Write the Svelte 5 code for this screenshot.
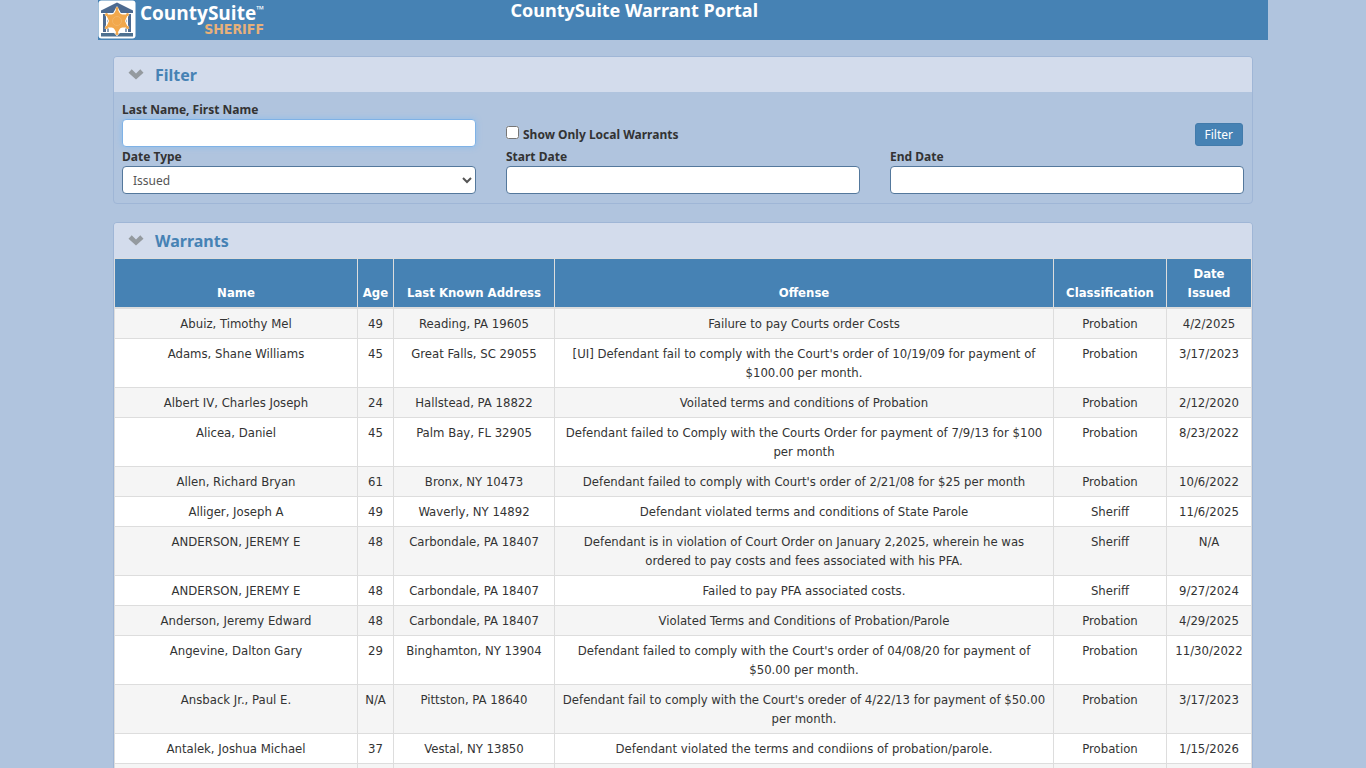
<script lang="ts">
    let filterOpen = $state(true);
    let warrantsOpen = $state(true);
    let name = $state("");
    let localOnly = $state(false);
    let dateType = $state("Issued");
    let startDate = $state("");
    let endDate = $state("");

    const warrants = [
        ["Abuiz, Timothy Mel", "49", "Reading, PA 19605", "Failure to pay Courts order Costs", "Probation", "4/2/2025"],
        ["Adams, Shane Williams", "45", "Great Falls, SC 29055", "[UI] Defendant fail to comply with the Court's order of 10/19/09 for payment of $100.00 per month.", "Probation", "3/17/2023"],
        ["Albert IV, Charles Joseph", "24", "Hallstead, PA 18822", "Voilated terms and conditions of Probation", "Probation", "2/12/2020"],
        ["Alicea, Daniel", "45", "Palm Bay, FL 32905", "Defendant failed to Comply with the Courts Order for payment of 7/9/13 for $100 per month", "Probation", "8/23/2022"],
        ["Allen, Richard Bryan", "61", "Bronx, NY 10473", "Defendant failed to comply with Court's order of 2/21/08 for $25 per month", "Probation", "10/6/2022"],
        ["Alliger, Joseph A", "49", "Waverly, NY 14892", "Defendant violated terms and conditions of State Parole", "Sheriff", "11/6/2025"],
        ["ANDERSON, JEREMY E", "48", "Carbondale, PA 18407", "Defendant is in violation of Court Order on January 2,2025, wherein he was ordered to pay costs and fees associated with his PFA.", "Sheriff", "N/A"],
        ["ANDERSON, JEREMY E", "48", "Carbondale, PA 18407", "Failed to pay PFA associated costs.", "Sheriff", "9/27/2024"],
        ["Anderson, Jeremy Edward", "48", "Carbondale, PA 18407", "Violated Terms and Conditions of Probation/Parole", "Probation", "4/29/2025"],
        ["Angevine, Dalton Gary", "29", "Binghamton, NY 13904", "Defendant failed to comply with the Court's order of 04/08/20 for payment of $50.00 per month.", "Probation", "11/30/2022"],
        ["Ansback Jr., Paul E.", "N/A", "Pittston, PA 18640", "Defendant fail to comply with the Court's oreder of 4/22/13 for payment of $50.00 per month.", "Probation", "3/17/2023"],
        ["Antalek, Joshua Michael", "37", "Vestal, NY 13850", "Defendant violated the terms and condiions of probation/parole.", "Probation", "1/15/2026"],
        ["", "", "", "", "", ""],
    ];
</script>

{#snippet chevron()}
    <svg class="chevron" viewBox="0 0 16 11" aria-hidden="true">
        <path d="M.5 3.7 3.7 .3 8 4.4 12.3 .3 15.5 3.7 8 10.6Z" fill="#949a9f" />
    </svg>
{/snippet}

<div class="container">
    <header>
        <div class="brand">
            <svg class="badge" viewBox="0 0 38 39" aria-hidden="true">
                <rect x=".5" y=".5" width="37" height="38" rx="3" fill="#fff" />
                <path d="M3 10.5 19 2.5 35 10.5v2.5H3Z" fill="#4d6a90" />
                <path d="M5 14h3v18H5ZM30 14h3v18h-3Z" fill="#4d6a90" />
                <path d="M9 14h2v18H9ZM27 14h2v18h-2Z" fill="#8ba0b8" />
                <path d="M3 33h13l3 3 3-3h13v3.500H3Z" fill="#4d7090" />
                <path d="M19 8 22.500 14.500 30 14.500 27 21 30 27.500 22.500 27.500 19 34 15.500 27.500 8 27.500 11 21 8 14.500 15.500 14.500Z" fill="#f2a84c" stroke="#fff" stroke-width="2" paint-order="stroke" />
                <g fill="#f2a84c">
                    <circle cx="19" cy="21" r="8" />
                    <circle cx="19" cy="8.500" r="1.500" />
                    <circle cx="29.500" cy="14.500" r="1.500" />
                    <circle cx="29.500" cy="27.500" r="1.500" />
                    <circle cx="19" cy="33.500" r="1.500" />
                    <circle cx="8.500" cy="27.500" r="1.500" />
                    <circle cx="8.500" cy="14.500" r="1.500" />
                </g>
                <circle cx="19" cy="21" r="4.500" fill="none" stroke="#f4b565" />
            </svg>
            <div class="wordmark">
                <div class="suite">CountySuite<span class="tm">™</span></div>
                <div class="sheriff">SHERIFF</div>
            </div>
        </div>
        <h1>CountySuite Warrant Portal</h1>
    </header>

    <main>
        <section class="panel">
            <h2>
                <button class="toggle" aria-expanded={filterOpen} onclick={() => (filterOpen = !filterOpen)}>
                    {@render chevron()}Filter
                </button>
            </h2>
            {#if filterOpen}
                <form class="filters" onsubmit={(e) => e.preventDefault()}>
                    <div class="field">
                        <label for="name">Last Name, First Name</label>
                        <input id="name" class="focused" type="text" bind:value={name} />
                    </div>
                    <div class="check">
                        <input id="local" type="checkbox" bind:checked={localOnly} />
                        <label for="local">Show Only Local Warrants</label>
                    </div>
                    <div class="actions">
                        <button class="submit" type="submit">Filter</button>
                    </div>
                    <div class="field">
                        <label for="dateType">Date Type</label>
                        <select id="dateType" bind:value={dateType}>
                            <option>Issued</option>
                        </select>
                    </div>
                    <div class="field">
                        <label for="startDate">Start Date</label>
                        <input id="startDate" type="text" bind:value={startDate} />
                    </div>
                    <div class="field">
                        <label for="endDate">End Date</label>
                        <input id="endDate" type="text" bind:value={endDate} />
                    </div>
                </form>
            {/if}
        </section>

        <section class="panel">
            <h2>
                <button class="toggle" aria-expanded={warrantsOpen} onclick={() => (warrantsOpen = !warrantsOpen)}>
                    {@render chevron()}Warrants
                </button>
            </h2>
            {#if warrantsOpen}
                <table>
                    <colgroup>
                        <col class="c-name" />
                        <col class="c-age" />
                        <col class="c-address" />
                        <col />
                        <col class="c-class" />
                        <col class="c-date" />
                    </colgroup>
                    <thead>
                        <tr>
                            <th>Name</th>
                            <th>Age</th>
                            <th>Last Known Address</th>
                            <th>Offense</th>
                            <th>Classification</th>
                            <th>Date Issued</th>
                        </tr>
                    </thead>
                    <tbody>
                        {#each warrants as row}
                            <tr>
                                {#each row as cell}
                                    <td>{cell}</td>
                                {/each}
                            </tr>
                        {/each}
                    </tbody>
                </table>
            {/if}
        </section>
    </main>
</div>

<style>
    :global(body) {
        background: #b0c4de;
    }

    .container {
        max-width: 1170px;
        margin: 0 auto;
        font-family: "Noto Sans", Tahoma, sans-serif;
        font-size: 12px;
        line-height: 19px;
        color: #333;
    }

    header {
        display: grid;
        grid-template-columns: 3fr 5fr 4fr;
        height: 40px;
        background: #4682b4;
        color: #fff;
    }

    h1 {
        margin: 0;
        font-size: 18px;
        line-height: 20px;
        text-align: center;
    }

    .brand {
        display: flex;
        gap: 4px;
    }

    .badge {
        width: 38px;
        height: 39px;
    }

    .wordmark {
        width: 124px;
        padding-top: 4px;
        font-weight: bold;
        white-space: nowrap;
    }

    .suite {
        display: flex;
        font-family: "Open Sans", sans-serif;
        font-size: 19px;
        line-height: 18px;
    }

    .tm {
        font-size: 10px;
        line-height: 10px;
    }

    .sheriff {
        font-family: "DejaVu Sans Condensed", Tahoma, sans-serif;
        font-size: 14px;
        line-height: 14px;
        text-align: right;
        color: #e8b07a;
    }

    main {
        padding: 16px 15px 0;
    }

    .panel {
        margin-bottom: 18px;
        border: 1px solid #9fb6d6;
        border-radius: 4px;
    }

    h2 {
        margin: 0;
        font-size: 16px;
        line-height: 20px;
        background: #d3dcec;
        border-radius: 3px 3px 0 0;
    }

    .toggle {
        display: flex;
        align-items: center;
        gap: 11px;
        width: 100%;
        padding: 8px 14px 7px;
        border: 0;
        background: none;
        font: inherit;
        color: #4682b4;
        cursor: pointer;
    }

    .chevron {
        width: 16px;
        height: 11px;
        margin-bottom: 2px;
    }

    .filters {
        display: grid;
        grid-template-columns: repeat(3, 1fr);
        column-gap: 30px;
        padding: 8px 8px 9px;
    }

    label {
        display: block;
        font-weight: bold;
    }

    input[type="text"],
    select {
        display: block;
        width: 100%;
        height: 28px;
        box-sizing: border-box;
        padding: 4px 6px;
        border: 1px solid #54789c;
        border-radius: 4px;
        background-color: #fff;
        font: inherit;
        color: #555;
    }

    input.focused {
        border-color: #7fb2e6;
        box-shadow: 0 0 6px #8fbdeb;
    }

    .check {
        display: flex;
        align-items: center;
        gap: 4px;
        padding-top: 22px;
    }

    .check input {
        margin: 0 0 4px;
    }

    .actions {
        display: flex;
        align-items: center;
        justify-content: flex-end;
        padding: 22px 1px 0 0;
    }

    .submit {
        padding: 1px 9px;
        border: 1px solid #427bab;
        border-radius: 3px;
        background: #4682b4;
        font: inherit;
        color: #fff;
    }

    table {
        width: 100%;
        table-layout: fixed;
        border-collapse: collapse;
        background: #fff;
        font-family: "DejaVu Sans Condensed", Tahoma, sans-serif;
        font-size: 13px;
        text-align: center;
    }

    .c-name {
        width: 243px;
    }

    .c-age {
        width: 36px;
    }

    .c-address {
        width: 161px;
    }

    .c-class {
        width: 113px;
    }

    .c-date {
        width: 85px;
    }

    th,
    td {
        height: 19px;
        padding: 5px;
        border: 1px solid #ddd;
    }

    th {
        padding: 5px 4px;
        border-bottom-width: 2px;
        background: #4682b4;
        color: #fff;
        vertical-align: bottom;
    }

    td {
        vertical-align: top;
    }

    tbody tr:nth-child(odd) {
        background: #f5f5f5;
    }
</style>
